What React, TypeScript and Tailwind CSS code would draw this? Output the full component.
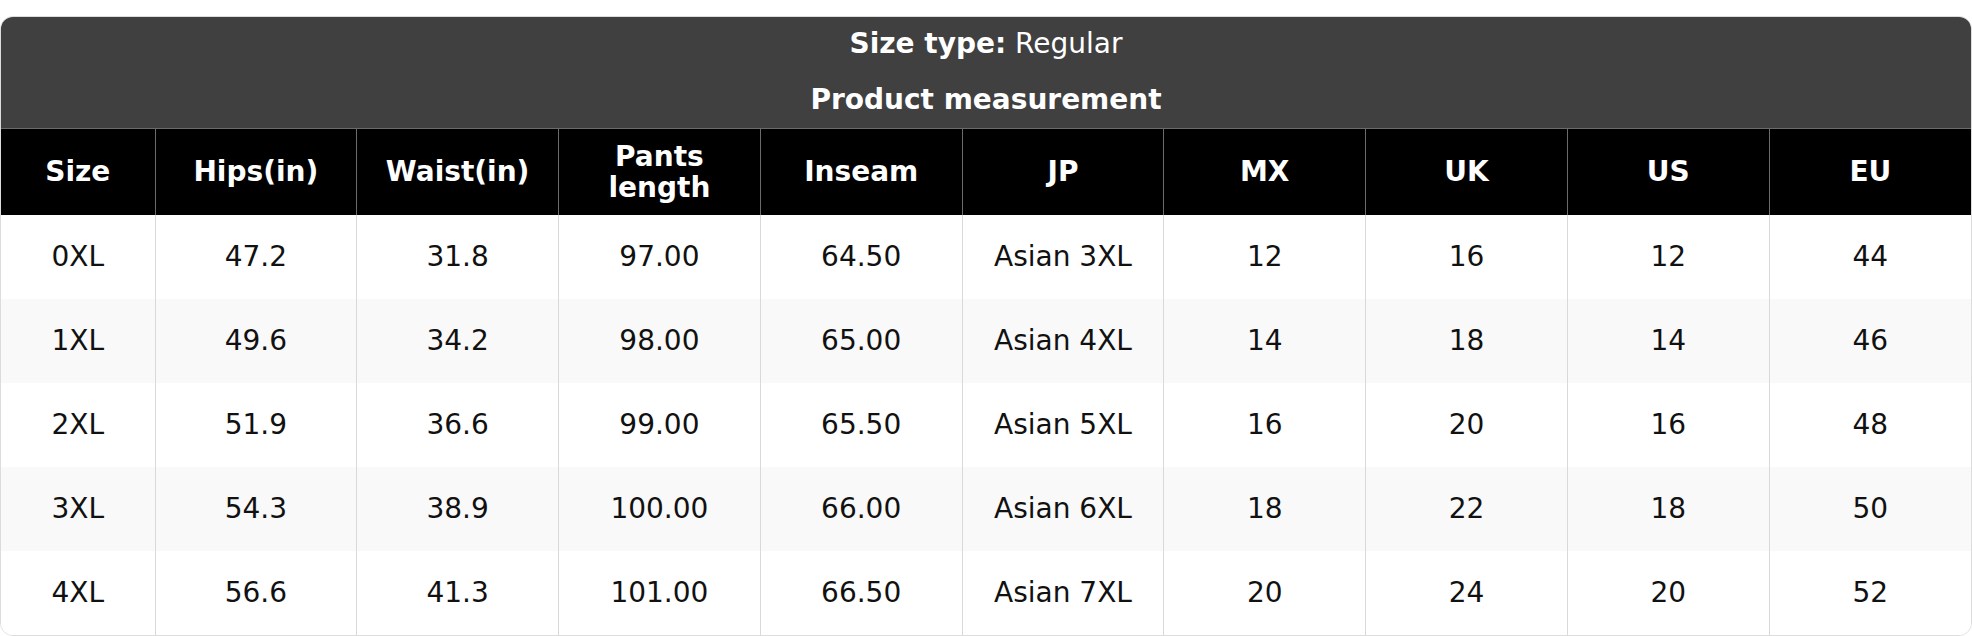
const columns = ['Size', 'Hips(in)', 'Waist(in)', 'Pants length', 'Inseam', 'JP', 'MX', 'UK', 'US', 'EU'];

const rows = [
  ['0XL', '47.2', '31.8', '97.00', '64.50', 'Asian 3XL', '12', '16', '12', '44'],
  ['1XL', '49.6', '34.2', '98.00', '65.00', 'Asian 4XL', '14', '18', '14', '46'],
  ['2XL', '51.9', '36.6', '99.00', '65.50', 'Asian 5XL', '16', '20', '16', '48'],
  ['3XL', '54.3', '38.9', '100.00', '66.00', 'Asian 6XL', '18', '22', '18', '50'],
  ['4XL', '56.6', '41.3', '101.00', '66.50', 'Asian 7XL', '20', '24', '20', '52'],
];

export default function App() {
  return (
    <div className="bg-white pt-[16px] font-['DejaVu_Sans',sans-serif]">
      <div className="w-[1972px] overflow-hidden rounded-[13px] border border-[#dcdcdc]">
        {/* title block */}
        <div className="bg-[#404040] text-white text-[28px] text-center">
          <div className="h-[54px] flex items-center justify-center">
            <span>
              <b>Size type:</b> Regular
            </span>
          </div>
          <div className="h-[57px] flex items-center justify-center font-bold">Product measurement</div>
        </div>

        <table className="w-full table-fixed border-collapse text-[28px] text-center">
          <colgroup>
            <col className="w-[154px]" />
            {columns.slice(1).map((c) => (
              <col key={c} />
            ))}
          </colgroup>
          <thead>
            <tr className="bg-black text-white h-[86px] border-t border-[#6b6b6b]">
              {columns.map((c, i) => (
                <th
                  key={c}
                  className={`font-bold leading-[31px] px-2 ${i > 0 ? 'border-l border-[#6b6b6b]' : ''}`}
                >
                  {c === 'Pants length' ? (
                    <>
                      Pants
                      <br />
                      length
                    </>
                  ) : (
                    c
                  )}
                </th>
              ))}
            </tr>
          </thead>
          <tbody>
            {rows.map((r, ri) => (
              <tr key={r[0]} className={`h-[84px] ${ri % 2 === 1 ? 'bg-[#f9f9f9]' : 'bg-white'}`}>
                {r.map((v, i) => (
                  <td key={i} className={`text-[#111] ${i > 0 ? 'border-l border-[#d9d9d9]' : ''}`}>
                    {v}
                  </td>
                ))}
              </tr>
            ))}
          </tbody>
        </table>
      </div>
    </div>
  );
}
